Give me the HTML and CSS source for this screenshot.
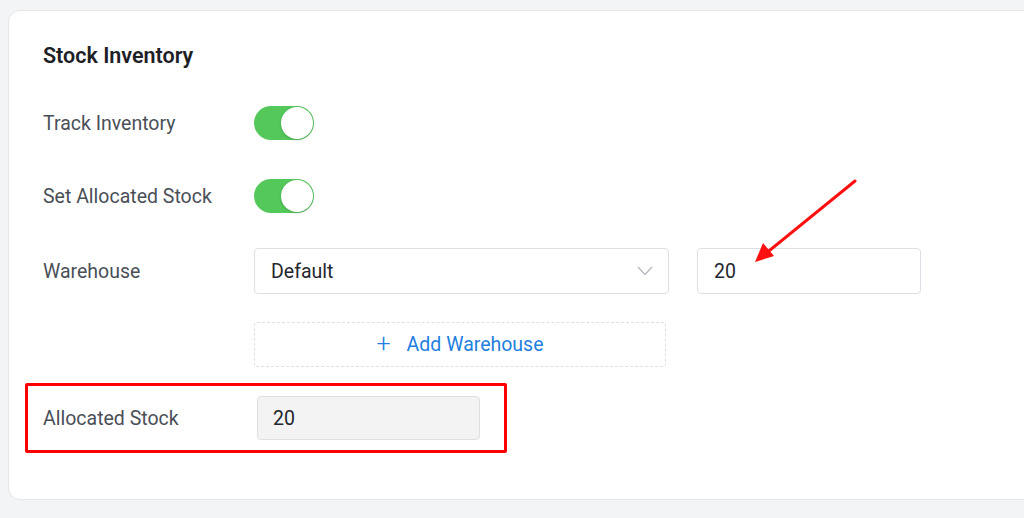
FILE: index.html
```html
<!DOCTYPE html>
<html>
<head>
<meta charset="utf-8">
<link rel="stylesheet" href="styles.css">
</head>
<body>
<div class="card">
  <h2 class="title">Stock Inventory</h2>
  <div class="row r1">
    <div class="label">Track Inventory</div>
    <div class="toggle"><span class="knob"></span></div>
  </div>
  <div class="row r2">
    <div class="label">Set Allocated Stock</div>
    <div class="toggle"><span class="knob"></span></div>
  </div>
  <div class="row r3">
    <div class="label">Warehouse</div>
    <div class="select">
      <span>Default</span>
      <svg class="chev" width="16" height="10" viewBox="0 0 16 10"><path d="M1 1 L8 8.5 L15 1" fill="none" stroke="#b5b9bf" stroke-width="1.3"/></svg>
    </div>
    <div class="input qty">20</div>
  </div>
  <div class="row r4">
    <div class="label"></div>
    <div class="add"><span class="plus">+</span><span>Add Warehouse</span></div>
  </div>
  <div class="highlight">
    <div class="label wide">Allocated Stock</div>
    <div class="input disabled">20</div>
  </div>
  <svg class="arrow" width="120" height="100" viewBox="0 0 120 100">
    <line x1="105" y1="4" x2="14" y2="78" stroke="#ff1010" stroke-width="3" stroke-linecap="round"/>
    <polygon points="5,85 13,66 24,79" fill="#ff1010"/>
  </svg>
</div>
</body>
</html>
```
FILE: styles.css
```css
html, body {
  margin: 0;
  padding: 0;
}
body {
  background: #f3f4f6;
  font-family: Roboto, "Liberation Sans", Arial, sans-serif;
  width: 1024px;
  height: 518px;
  overflow: hidden;
  position: relative;
}
.card {
  position: relative;
  margin: 10px 0 0 8px;
  width: 1040px;
  height: 490px;
  box-sizing: border-box;
  background: #fff;
  border: 1px solid #e4e6ea;
  border-radius: 12px;
  padding: 32px 0 0 34px;
}
.title {
  margin: 0;
  font-size: 21.5px;
  line-height: 26px;
  font-weight: 600;
  color: #1d2126;
}
.row {
  display: flex;
  align-items: center;
}
.r1 { margin-top: 37px; }
.r2 { margin-top: 39px; }
.r3 { margin-top: 35px; }
.r4 { margin-top: 28px; }
.label {
  width: 211px;
  flex: none;
  font-size: 19.5px;
  color: #4a4f57;
}
.label.wide { width: 214px; }
.toggle {
  width: 60px;
  height: 34px;
  border-radius: 17px;
  background: #55c85c;
  position: relative;
  box-sizing: border-box;
}
.knob {
  position: absolute;
  right: 1px;
  top: 1px;
  width: 32px;
  height: 32px;
  border-radius: 50%;
  background: #fff;
  box-shadow: 0 1px 3px rgba(0,0,0,0.18);
}
.select {
  width: 415px;
  height: 46px;
  box-sizing: border-box;
  border: 1px solid #dcdfe3;
  border-radius: 4px;
  display: flex;
  align-items: center;
  justify-content: space-between;
  padding: 0 15px 0 16px;
  font-size: 19.5px;
  color: #23272d;
}
.input {
  height: 46px;
  box-sizing: border-box;
  border: 1px solid #dcdfe3;
  border-radius: 4px;
  display: flex;
  align-items: center;
  padding-left: 16px;
  font-size: 19.5px;
  color: #23272d;
}
.qty {
  width: 224px;
  margin-left: 28px;
}
.add {
  width: 412px;
  height: 45px;
  box-sizing: border-box;
  border: 1px dashed #dcdfe3;
  border-radius: 3px;
  display: flex;
  align-items: center;
  justify-content: center;
  font-size: 19.5px;
  color: #1f80e0;
  gap: 16px;
}
.plus {
  font-size: 25px;
  font-weight: 300;
  line-height: 1;
  margin-top: -3px;
}
.highlight {
  margin: 16px 0 0 -18px;
  width: 482px;
  height: 70px;
  box-sizing: border-box;
  border: 3px solid #ff0000;
  border-radius: 2px;
  display: flex;
  align-items: center;
  padding-left: 15px;
}
.disabled {
  width: 223px;
  height: 44px;
  background: #f3f3f3;
  border-color: #dddfe2;
  padding-left: 15px;
}
.arrow {
  position: absolute;
  left: 741px;
  top: 166px;
}
```
